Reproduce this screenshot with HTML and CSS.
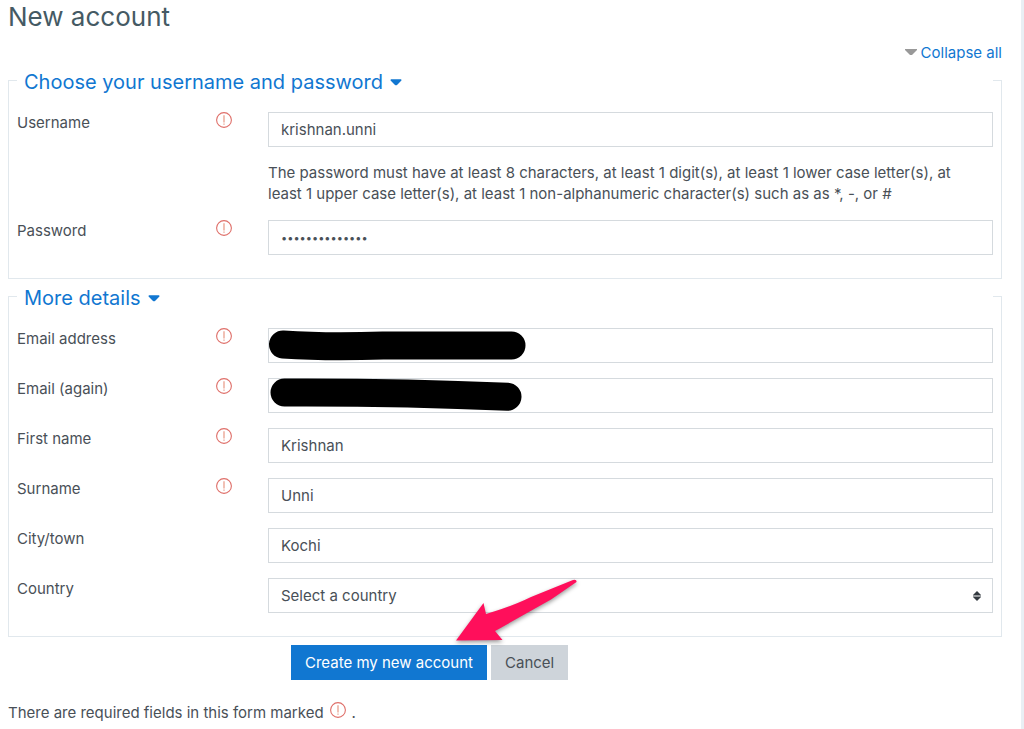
FILE: index.html
```html
<!DOCTYPE html>
<html lang="en">
<head>
<meta charset="utf-8">
<title>New account</title>
<meta name="viewport" content="width=device-width, initial-scale=1">
<link rel="stylesheet" href="styles.css">
</head>
<body>
<svg class="defs" aria-hidden="true">
  <symbol id="required" viewBox="0 0 16 16"><circle cx="8" cy="8" r="7.4" fill="none" stroke="#df6f69" stroke-width="1.1"/><path d="M8 3.2V10.6M8 11.5V12.7" fill="none" stroke="#e58e78" stroke-width="1.1"/></symbol>
</svg>
<main class="page">
  <h1 class="title">New account</h1>
  <div class="tools"><a class="collapse" href="#"><svg class="collapse-icon" viewBox="0 0 12 7" aria-hidden="true"><path d="M0 0H12V1L7 6H5L0 1Z" fill="#999"/></svg>Collapse all</a></div>
  <form class="form">
    <fieldset class="group">
      <legend class="legend"><a class="toggle" href="#">Choose your username and password<svg class="caret" viewBox="0 0 12 7" aria-hidden="true"><path d="M1 .3H11Q12 .8 11.2 1.8L7 6Q6 6.7 5 6L.8 1.8Q0 .8 1 .3Z" fill="#1177d1"/></svg></a></legend>
      <div class="rows">
        <div class="row"><div class="label"><label for="username">Username</label><svg class="req" role="img" aria-label="Required"><use href="#required"/></svg></div><input class="control" id="username" type="text" value="krishnan.unni"></div>
        <div class="row"><p class="help">The password must have at least 8 characters, at least 1 digit(s), at least 1 lower case letter(s), at least 1 upper case letter(s), at least 1 non-alphanumeric character(s) such as as *, -, or #</p></div>
        <div class="row"><div class="label"><label for="password">Password</label><svg class="req" role="img" aria-label="Required"><use href="#required"/></svg></div><input class="control password" id="password" type="password" value="abcdefghijklmn"></div>
      </div>
    </fieldset>
    <fieldset class="group">
      <legend class="legend"><a class="toggle" href="#">More details<svg class="caret" viewBox="0 0 12 7" aria-hidden="true"><path d="M1 .3H11Q12 .8 11.2 1.8L7 6Q6 6.7 5 6L.8 1.8Q0 .8 1 .3Z" fill="#1177d1"/></svg></a></legend>
      <div class="rows">
        <div class="row"><div class="label"><label for="email">Email address</label><svg class="req" role="img" aria-label="Required"><use href="#required"/></svg></div><div class="field"><input class="control" id="email" type="email"><svg class="marker" viewBox="0 0 260 36" aria-hidden="true"><path d="M15 16.5Q60 19.5 115 17.5H243.500" fill="none" stroke="#000" stroke-width="28" stroke-linecap="round"/></svg></div></div>
        <div class="row"><div class="label"><label for="email2">Email (again)</label><svg class="req" role="img" aria-label="Required"><use href="#required"/></svg></div><div class="field"><input class="control" id="email2" type="email"><svg class="marker" viewBox="0 0 260 36" aria-hidden="true"><path d="M16.500 14.500Q130 14 239.500 18.700" fill="none" stroke="#000" stroke-width="28" stroke-linecap="round"/></svg></div></div>
        <div class="row"><div class="label"><label for="first">First name</label><svg class="req" role="img" aria-label="Required"><use href="#required"/></svg></div><input class="control" id="first" type="text" value="Krishnan"></div>
        <div class="row"><div class="label"><label for="last">Surname</label><svg class="req" role="img" aria-label="Required"><use href="#required"/></svg></div><input class="control" id="last" type="text" value="Unni"></div>
        <div class="row"><div class="label"><label for="city">City/town</label></div><input class="control" id="city" type="text" value="Kochi"></div>
        <div class="row"><div class="label"><label for="country">Country</label></div><div class="field"><select class="control" id="country"><option>Select a country</option></select><svg class="updown" viewBox="0 0 8 10" aria-hidden="true"><path d="M4 0L8 4V4.500H0V4ZM0 5.500H8V6L4 10L0 6Z" fill="#343a40"/></svg></div></div>
      </div>
    </fieldset>
    <div class="actions">
      <button class="btn primary" type="submit">Create my new account</button>
      <button class="btn" type="button">Cancel</button>
      <svg class="arrow" viewBox="0 0 130 70" aria-hidden="true"><path d="M5 65.500L32.500 28L35 39Q62 31 80 22L122 5Q126 4 125.500 7L100 24.500Q60 47 44 56L51.500 65Z" fill="#ff0f5b"/></svg>
    </div>
  </form>
  <p class="note">There are required fields in this form marked <svg class="req" role="img" aria-label="Required"><use href="#required"/></svg> .</p>
</main>
</body>
</html>
```
FILE: styles.css
```css
* { box-sizing: border-box; }
body {
  margin: 0;
  background: #fff;
  color: #495057;
  font: 15px/21px Inter, "Open Sans", sans-serif;
}
a { color: #1177d1; text-decoration: none; }
.defs { position: absolute; width: 0; height: 0; }
.page {
  min-height: 100vh;
  padding: 0 19px 0 8px;
  border-right: 3px solid #e9eff4;
}
.title { margin: 0; color: #455a64; font-size: 26px; font-weight: 400; line-height: 34px; }
.tools { display: flex; justify-content: flex-end; padding: 8px 0 3px; }
.collapse { display: flex; align-items: center; gap: 4px; }
.collapse-icon { width: 12px; height: 7px; }
.group { min-width: 0; margin: 0 0 3px; padding: 18px 8px 23px; border: 1px solid #e1e8ed; }
.legend { width: 100%; padding: 4px 7px 0; font-size: 20px; line-height: 24px; }
.toggle { display: flex; align-items: center; gap: 7px; }
.caret { width: 12px; height: 7px; }
.rows { display: grid; gap: 15px; }
.row { display: grid; grid-template-columns: 25% 1fr; column-gap: 7px; }
.label { display: flex; justify-content: space-between; padding-right: 29px; }
.req { width: 16px; height: 16px; }
.help { grid-column: 2; margin: 0; padding: 0 24px 1px 0; }
.field { position: relative; display: grid; }
.control {
  width: 100%;
  height: 35px;
  padding: 0 12px;
  border: 1px solid #d5dade;
  border-radius: 0;
  background: #fff;
  color: #495057;
  font: inherit;
  appearance: none;
}
.password { font-size: 11px; }
.marker { position: absolute; top: 0; left: 0; width: 260px; height: 36px; pointer-events: none; }
.updown { position: absolute; top: 13px; right: 12px; width: 8px; height: 10px; pointer-events: none; }
.actions { position: relative; display: flex; gap: 4px; width: max-content; margin-left: 283px; padding-top: 5px; }
.btn {
  height: 35px;
  padding: 0 13px;
  border: 1px solid #ced4da;
  background: #ced4da;
  color: #495057;
  font: inherit;
}
.primary { border-color: #1177d1; background: #1177d1; color: #fff; }
.arrow {
  position: absolute;
  top: -65px;
  left: 160px;
  width: 130px;
  height: 70px;
  pointer-events: none;
  filter: drop-shadow(0 2px 2px #00000066);
}
.note { display: flex; gap: 6px; margin: 0; padding: 22px 0 6px; }
```
